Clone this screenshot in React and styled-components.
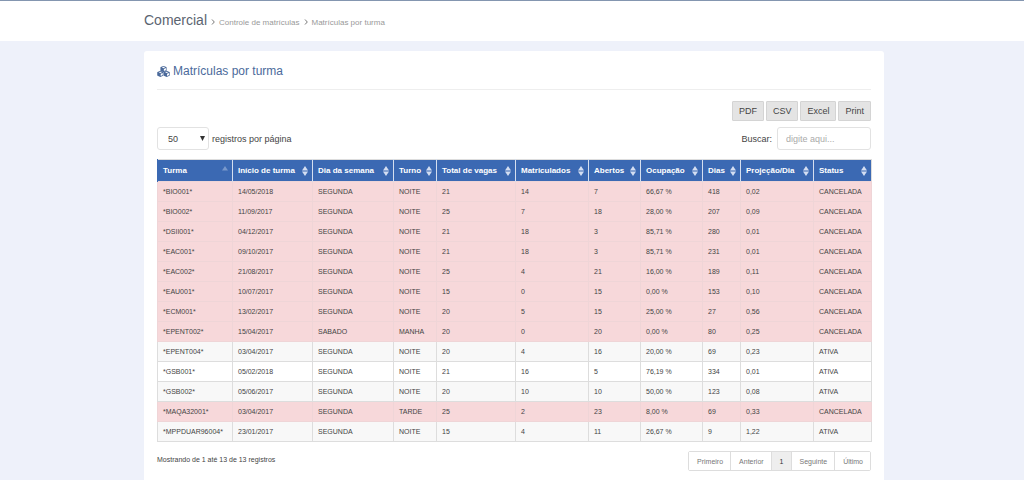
import React, { useState } from "react";
import styled, { createGlobalStyle, ThemeProvider } from "styled-components";

const theme = {
  page: "#eef1fa",
  primary: "#3b69b3",
  title: "#4b6a9b",
  text: "#444444",
  muted: "#999999",
  border: "#dddddd",
  danger: "#f7d8da",
};

const GlobalStyle = createGlobalStyle`
  * { box-sizing: border-box; }
  body {
    margin: 0;
    background: ${theme.page};
    color: ${theme.text};
    font-family: "Liberation Sans", Arial, sans-serif;
    font-size: 9px;
  }
  button, input, select { font-family: inherit; color: inherit; }
`;

const Container = styled.div`
  max-width: 744px;
  margin: 0 auto;
  padding-left: 4px;
`;

const Header = styled.header`
  background: #ffffff;
  border-top: 1px solid #8496b0;
  height: 41px;
`;

const Breadcrumb = styled.nav`
  display: flex;
  align-items: baseline;
  gap: 4px;
  padding-top: 11px;
  line-height: 16px;
`;

const Section = styled.h1`
  margin: 0;
  font-size: 14px;
  font-weight: normal;
  color: #5b6470;
`;

const Crumb = styled.a`
  font-size: 8px;
  color: ${({ theme }) => theme.muted};
  text-decoration: none;
`;

const Chevron = styled.svg`
  width: 4px;
  height: 6px;
  fill: none;
  stroke: #777777;
`;

const Card = styled.main`
  margin-top: 10px;
  padding: 12px 13px 24px;
  background: #ffffff;
  border-radius: 3px;
`;

const Title = styled.h2`
  display: flex;
  align-items: center;
  gap: 3px;
  margin: 0;
  padding-bottom: 10px;
  border-bottom: 1px solid #eeeeee;
  font-size: 12px;
  font-weight: normal;
  line-height: 16px;
  color: ${({ theme }) => theme.title};
`;

const Toolbar = styled.div`
  display: flex;
  justify-content: flex-end;
  gap: 2px;
  margin-top: 11px;
`;

const ExportButton = styled.button`
  height: 20px;
  padding: 0 6px;
  border: 1px solid #d4d4d4;
  border-radius: 1px;
  background: #e4e4e4;
  font-size: 9px;
  cursor: pointer;
`;

const Filters = styled.div`
  display: flex;
  justify-content: space-between;
  align-items: center;
  margin: 6px 0 9px;
`;

const Field = styled.label`
  display: flex;
  align-items: center;
  gap: ${({ $gap }) => $gap}px;
`;

const SelectBox = styled.span`
  position: relative;
  display: flex;

  & svg {
    position: absolute;
    right: 4px;
    top: 9px;
    fill: #333333;
    pointer-events: none;
  }
`;

const Select = styled.select`
  appearance: none;
  width: 52px;
  height: 23px;
  padding: 0 10px;
  border: 1px solid #e2e2e2;
  border-radius: 3px;
  background: #ffffff;
  font-size: 9px;
`;

const Search = styled.input`
  width: 94px;
  height: 23px;
  padding: 0 8px;
  border: 1px solid #e2e2e2;
  border-radius: 3px;
  background: #ffffff;
  font-size: 9px;

  &::placeholder {
    color: #aaaaaa;
  }
`;

const Table = styled.table`
  width: 100%;
  table-layout: fixed;
  border-collapse: collapse;
  border: 1px solid ${({ theme }) => theme.border};
`;

const Th = styled.th`
  width: ${({ $width }) => $width}px;
  height: 22px;
  padding: 0 4px 0 5px;
  border-left: 1px solid #d5dfef;
  background: ${({ theme }) => theme.primary};
  color: #ffffff;
  font-size: 8px;
  text-align: left;
  white-space: nowrap;

  &:first-child {
    border-left-color: ${({ theme }) => theme.primary};
  }
`;

const HeadCell = styled.div`
  display: flex;
  justify-content: space-between;
  align-items: center;
`;

const SortIcon = styled.svg`
  flex: none;
  width: 6px;
  height: 10px;
  fill: #d3def2;
  opacity: ${({ $sorted }) => ($sorted ? 0.4 : 1)};
`;

const Row = styled.tr`
  background: ${({ $cancelled, theme }) => ($cancelled ? theme.danger : "#ffffff")};

  &:nth-child(odd) {
    background: ${({ $cancelled, theme }) => ($cancelled ? theme.danger : "#f8f8f8")};
  }
  & td {
    border-color: ${({ $cancelled, theme }) => ($cancelled ? "#efd5d7" : theme.border)};
  }
`;

const Td = styled.td`
  height: 20px;
  padding: 0 5px;
  border: 1px solid;
  font-size: 7px;
  line-height: 8px;
  white-space: nowrap;
`;

const Footer = styled.div`
  display: flex;
  justify-content: space-between;
  align-items: flex-start;
  margin-top: 9px;
`;

const Info = styled.div`
  font-size: 7px;
  line-height: 18px;
`;

const Pagination = styled.div`
  display: flex;
  border: 1px solid ${({ theme }) => theme.border};
  border-radius: 2px;
`;

const PageButton = styled.button`
  height: 18px;
  padding: 0 7px 0 8px;
  border: 0;
  border-left: 1px solid ${({ theme }) => theme.border};
  background: ${({ $active }) => ($active ? "#eeeeee" : "#ffffff")};
  color: ${({ $active }) => ($active ? "#333333" : "#777777")};
  font-size: 7px;

  &:first-child {
    border-left: 0;
  }
`;

const columns = [
  ["Turma", 75],
  ["Início de turma", 80],
  ["Dia da semana", 81],
  ["Turno", 43],
  ["Total de vagas", 79],
  ["Matriculados", 73],
  ["Abertos", 52],
  ["Ocupação", 62],
  ["Dias", 38],
  ["Projeção/Dia", 73],
  ["Status", 58],
];

const rows = [
  ["*BIO001*", "14/05/2018", "SEGUNDA", "NOITE", "21", "14", "7", "66,67 %", "418", "0,02", "CANCELADA"],
  ["*BIO002*", "11/09/2017", "SEGUNDA", "NOITE", "25", "7", "18", "28,00 %", "207", "0,09", "CANCELADA"],
  ["*DSII001*", "04/12/2017", "SEGUNDA", "NOITE", "21", "18", "3", "85,71 %", "280", "0,01", "CANCELADA"],
  ["*EAC001*", "09/10/2017", "SEGUNDA", "NOITE", "21", "18", "3", "85,71 %", "231", "0,01", "CANCELADA"],
  ["*EAC002*", "21/08/2017", "SEGUNDA", "NOITE", "25", "4", "21", "16,00 %", "189", "0,11", "CANCELADA"],
  ["*EAU001*", "10/07/2017", "SEGUNDA", "NOITE", "15", "0", "15", "0,00 %", "153", "0,10", "CANCELADA"],
  ["*ECM001*", "13/02/2017", "SEGUNDA", "NOITE", "20", "5", "15", "25,00 %", "27", "0,56", "CANCELADA"],
  ["*EPENT002*", "15/04/2017", "SABADO", "MANHA", "20", "0", "20", "0,00 %", "80", "0,25", "CANCELADA"],
  ["*EPENT004*", "03/04/2017", "SEGUNDA", "NOITE", "20", "4", "16", "20,00 %", "69", "0,23", "ATIVA"],
  ["*GSB001*", "05/02/2018", "SEGUNDA", "NOITE", "21", "16", "5", "76,19 %", "334", "0,01", "ATIVA"],
  ["*GSB002*", "05/06/2017", "SEGUNDA", "NOITE", "20", "10", "10", "50,00 %", "123", "0,08", "ATIVA"],
  ["*MAQA32001*", "03/04/2017", "SEGUNDA", "TARDE", "25", "2", "23", "8,00 %", "69", "0,33", "CANCELADA"],
  ["*MPPDUAR96004*", "23/01/2017", "SEGUNDA", "NOITE", "15", "4", "11", "26,67 %", "9", "1,22", "ATIVA"],
];

const pages = ["Primeiro", "Anterior", "1", "Seguinte", "Último"];

// left face solid, right face open
const cubes = [
  [3.3, 0],
  [0, 5],
  [6.6, 5],
];

function CubesIcon() {
  return (
    <svg width="13" height="11" viewBox="0 0 13 11.4" fill="currentColor" aria-hidden="true">
      {cubes.map(([x, y]) => (
        <path
          key={`${x}-${y}`}
          transform={`translate(${x} ${y})`}
          fillRule="evenodd"
          d="M3.2 0 6.1 1.1Q6.4 1.2 6.4 1.6V4.6Q6.4 4.9 6.1 5.1L3.2 6.4.3 5.1Q0 4.9 0 4.6V1.6Q0 1.2.3 1.1ZM3.2.9 1.5 1.6 3.2 2.3 4.9 1.6ZM3.6 3.1V5.3L5.7 4.3V2.2Z"
        />
      ))}
    </svg>
  );
}

function Separator() {
  return (
    <Chevron viewBox="0 0 4 6" aria-hidden="true">
      <path d="M1 .5 3.3 3 1 5.5" />
    </Chevron>
  );
}

function Sort({ sorted }) {
  return (
    <SortIcon viewBox="0 0 6 10" $sorted={sorted} aria-hidden="true">
      <path d="M0 4.5 3 0 6 4.5z" />
      {sorted ? null : <path d="M0 5.5 3 10 6 5.5z" />}
    </SortIcon>
  );
}

function App() {
  const [size, setSize] = useState("50");
  const [search, setSearch] = useState("");

  return (
    <ThemeProvider theme={theme}>
      <GlobalStyle />
      <Header>
        <Container>
          <Breadcrumb>
            <Section>Comercial</Section>
            <Separator />
            <Crumb href="#">Controle de matrículas</Crumb>
            <Separator />
            <Crumb href="#">Matrículas por turma</Crumb>
          </Breadcrumb>
        </Container>
      </Header>
      <Container>
        <Card>
          <Title>
            <CubesIcon />
            Matrículas por turma
          </Title>
          <Toolbar>
            {["PDF", "CSV", "Excel", "Print"].map((label) => (
              <ExportButton key={label}>{label}</ExportButton>
            ))}
          </Toolbar>
          <Filters>
            <Field $gap={3}>
              <SelectBox>
                <Select value={size} onChange={(e) => setSize(e.target.value)}>
                  <option>10</option>
                  <option>25</option>
                  <option>50</option>
                </Select>
                <svg width="5" height="5" viewBox="0 0 5 5" aria-hidden="true">
                  <path d="M0 0h5L2.5 5z" />
                </svg>
              </SelectBox>
              registros por página
            </Field>
            <Field $gap={5}>
              Buscar:
              <Search
                placeholder="digite aqui..."
                value={search}
                onChange={(e) => setSearch(e.target.value)}
              />
            </Field>
          </Filters>
          <Table>
            <thead>
              <tr>
                {columns.map(([name, width], index) => (
                  <Th key={name} $width={width}>
                    <HeadCell>
                      {name}
                      <Sort sorted={index === 0} />
                    </HeadCell>
                  </Th>
                ))}
              </tr>
            </thead>
            <tbody>
              {rows.map((row) => (
                <Row key={row[0]} $cancelled={row[10] === "CANCELADA"}>
                  {row.map((value, index) => (
                    <Td key={index}>{value}</Td>
                  ))}
                </Row>
              ))}
            </tbody>
          </Table>
          <Footer>
            <Info>Mostrando de 1 até 13 de 13 registros</Info>
            <Pagination>
              {pages.map((page) => (
                <PageButton key={page} $active={page === "1"}>
                  {page}
                </PageButton>
              ))}
            </Pagination>
          </Footer>
        </Card>
      </Container>
    </ThemeProvider>
  );
}

export default App;
